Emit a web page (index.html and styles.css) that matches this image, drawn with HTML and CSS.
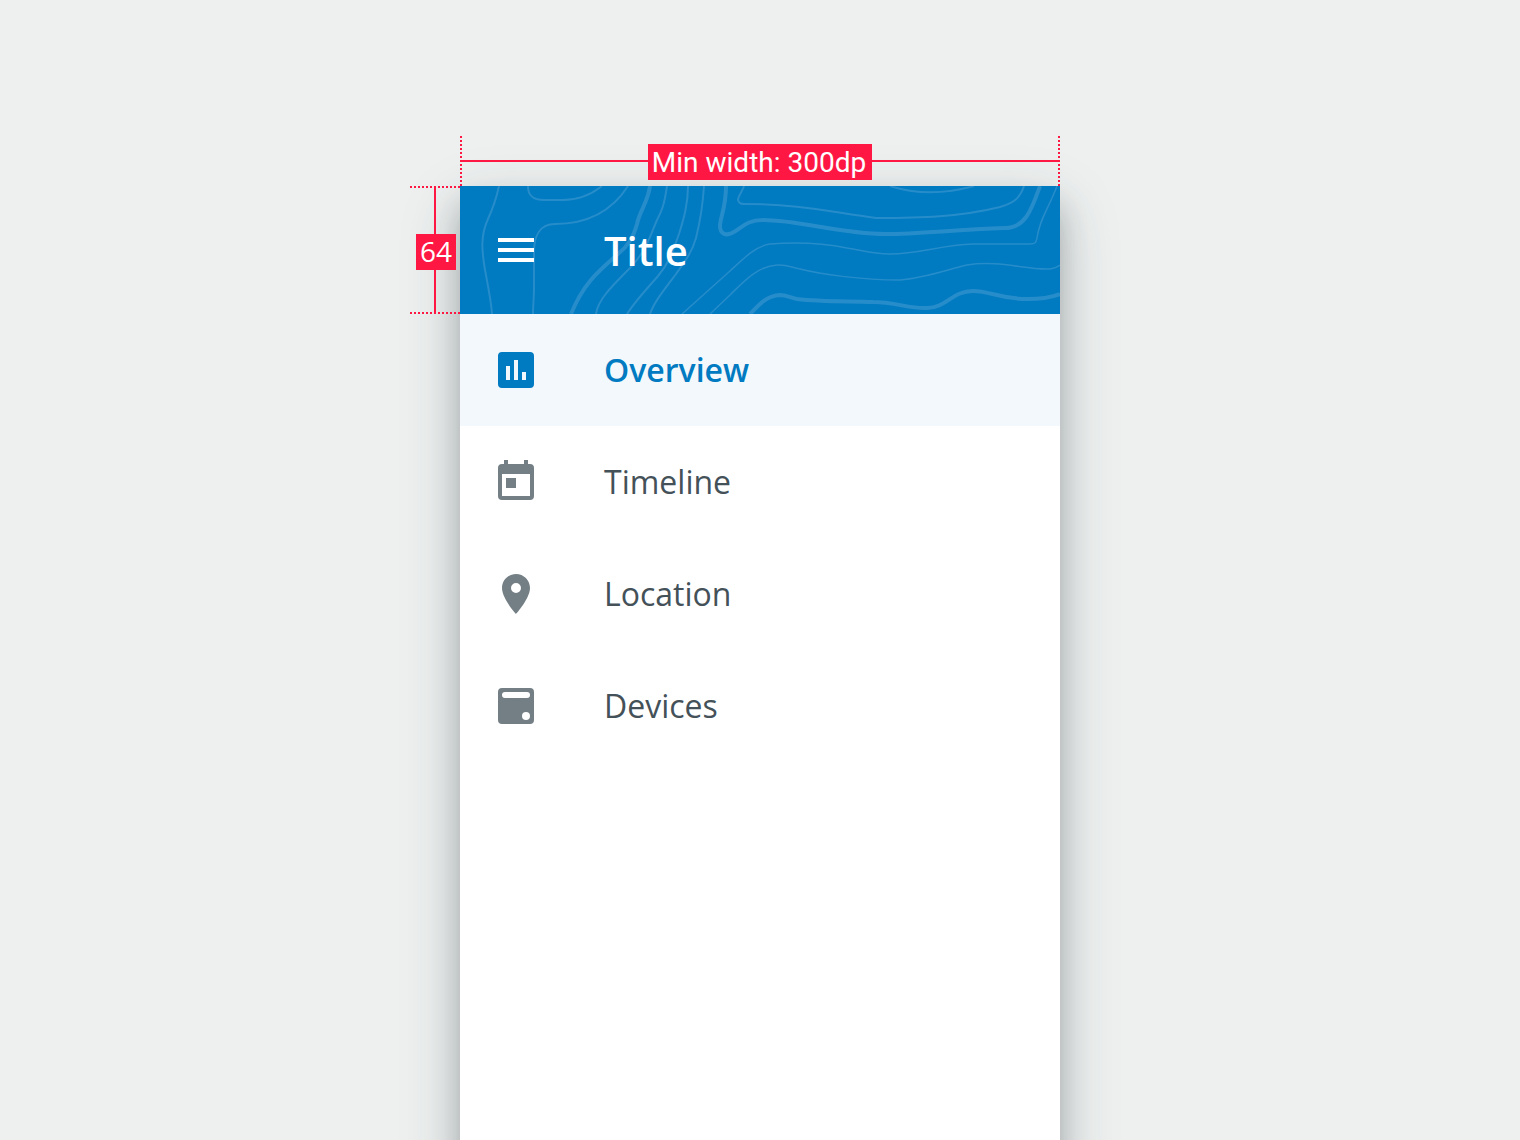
FILE: index.html
```html
<!DOCTYPE html>
<html lang="en">
<head>
<meta charset="utf-8">
<title>Navigation drawer</title>
<link rel="stylesheet" href="styles.css">
</head>
<body>
<main class="stage">
  <div class="measure measure-width"><span class="measure-label">Min width: 300dp</span></div>
  <div class="measure measure-height"><span class="measure-label measure-label-number">64</span></div>
  <section class="drawer">
    <header class="drawer-header">
      <svg class="contours" viewBox="0 0 600 128" preserveAspectRatio="xMidYMid slice" aria-hidden="true">
        <g class="contour-thin">
          <path d="M39 0C36 14 33 22 28 33C20 50 22 66 25 84C28 100 31 114 32 128"/>
          <path d="M68 0C68 10 73 14 84 14H103C120 14 132 8 142 0"/>
          <path d="M168 0C152 25 128 38 95 38C80 38 74 50 74 66V100C74 112 73 120 73 128"/>
          <path d="M207 0C204 20 202 24 197 34C190 50 187 64 170 82C150 102 138 114 136 128"/>
          <path d="M228 0C228 18 224 32 219 48C213 64 210 76 198 90C186 104 176 114 167 128"/>
          <path d="M244 0C243 16 241 32 236 52C232 66 226 74 216 88C204 104 194 116 190 128"/>
          <path d="M284 0C282 6 278 10 278 14C279 18 282 18 285 18C340 18 370 26 416 32C460 32 500 31 540 21C554 17 560 12 564 0"/>
          <path d="M430 0C455 8 485 8 514 0"/>
        </g>
        <g class="contour-fine">
          <path d="M222 128L270 85C284 72 296 60 310 58C336 56 362 57 387 62C402 64 410 68 430 68C460 68 480 59 513 58H570C576 58 576 56 577 52C580 32 588 24 597 0"/>
          <path d="M250 128L270 109C284 95 298 80 317 79C327 78 332 82 340 83C360 88 400 94 440 94C464 92 486 84 507 79C540 74 565 84 590 83C595 82 598 81 600 79"/>
        </g>
        <g class="contour-thick">
          <path d="M190 0C188 16 180 24 177 38C173 52 168 60 158 68C140 84 124 96 111 128"/>
          <path d="M266 0C266 22 260 32 260 40C260 48 266 50 272 47C282 42 286 34 303 34C340 34 380 48 425 48C460 48 490 44 545 42C566 42 572 22 580 0"/>
          <path d="M290 128C298 120 305 110 320 109C327 109 330 112 337 113C362 116 388 115 413 116C435 116 450 123 467 122C486 122 492 105 513 105C530 105 540 113 567 113C582 113 592 111 600 108"/>
        </g>
      </svg>
      <button class="menu-button" type="button" aria-label="Menu">
        <svg class="icon" viewBox="0 0 24 24" aria-hidden="true"><path d="M3 6h18v2H3zM3 11h18v2H3zM3 16h18v2H3z"/></svg>
      </button>
      <h1 class="drawer-title">Title</h1>
    </header>
    <nav>
      <ul class="nav-list">
        <li><a class="nav-item nav-item-active" href="#overview" aria-current="page">
          <svg class="icon" viewBox="0 0 24 24" aria-hidden="true"><path fill-rule="evenodd" d="M5 3h14a2 2 0 0 1 2 2v14a2 2 0 0 1-2 2H5a2 2 0 0 1-2-2V5a2 2 0 0 1 2-2zM7 10v7h2v-7zM11 7v10h2V7zM15 13v4h2v-4z"/></svg>
          <span>Overview</span></a></li>
        <li><a class="nav-item" href="#timeline">
          <svg class="icon" viewBox="0 0 24 24" aria-hidden="true"><path fill-rule="evenodd" d="M6 1h2v2h8V1h2v2h1a2 2 0 0 1 2 2v14a2 2 0 0 1-2 2H5a2 2 0 0 1-2-2V5a2 2 0 0 1 2-2h1zM5 8v11h14V8zM7 10h5v5H7z"/></svg>
          <span>Timeline</span></a></li>
        <li><a class="nav-item" href="#location">
          <svg class="icon" viewBox="0 0 24 24" aria-hidden="true"><path fill-rule="evenodd" d="M12 2C8.130 2 5 5.130 5 9c0 5.250 7 13 7 13s7-7.750 7-13c0-3.870-3.130-7-7-7zm0 9.500a2.500 2.500 0 0 1 0-5 2.500 2.500 0 0 1 0 5z"/></svg>
          <span>Location</span></a></li>
        <li><a class="nav-item" href="#devices">
          <svg class="icon" viewBox="0 0 24 24" aria-hidden="true"><path fill-rule="evenodd" d="M5 3h14a2 2 0 0 1 2 2v14a2 2 0 0 1-2 2H5a2 2 0 0 1-2-2V5a2 2 0 0 1 2-2zM6.500 5a1.500 1.500 0 0 0 0 3h11a1.500 1.500 0 0 0 0-3zM17 15a2 2 0 0 0 0 4 2 2 0 0 0 0-4z"/></svg>
          <span>Devices</span></a></li>
      </ul>
    </nav>
  </section>
</main>
</body>
</html>
```
FILE: styles.css
```css
* {
  box-sizing: border-box;
}

body {
  margin: 0;
  background: #edf0ef;
  font-family: "Open Sans", "Noto Sans", sans-serif;
}

.stage {
  --spec: #ff1744;
  display: grid;
  grid-template-columns: 1fr minmax(300px, 600px) 1fr;
  grid-template-rows: 50px 1fr;
  height: 100vh;
  padding-top: 136px;
  overflow: hidden;
}

/* Spec annotations */
.measure {
  z-index: 1;
  display: flex;
  align-items: center;
  justify-content: center;
  background-repeat: no-repeat;
}

.measure-width {
  grid-area: 1 / 2;
  padding-top: 2px;
  background-image:
    linear-gradient(var(--spec), var(--spec)),
    repeating-linear-gradient(to bottom, var(--spec) 0 2px, transparent 2px 4px),
    repeating-linear-gradient(to bottom, var(--spec) 0 2px, transparent 2px 4px);
  background-position: center, left top, right top;
  background-size: 100% 2px, 2px 100%, 2px 100%;
}

.measure-height {
  grid-area: 2 / 1;
  justify-self: end;
  width: 50px;
  height: 128px;
  padding: 4px 0 0 2px;
  background-image:
    linear-gradient(var(--spec), var(--spec)),
    repeating-linear-gradient(to right, var(--spec) 0 2px, transparent 2px 4px),
    repeating-linear-gradient(to right, var(--spec) 0 2px, transparent 2px 4px);
  background-position: center, left top, left bottom;
  background-size: 2px 100%, 100% 2px, 100% 2px;
}

.measure-label {
  height: 36px;
  padding: 0 6px 0 4px;
  background: var(--spec);
  color: #fff;
  font: 28px/38px Roboto, sans-serif;
  white-space: nowrap;
}

.measure-label-number {
  padding: 0 4px;
  font-family: "Open Sans", "Noto Sans", sans-serif;
  line-height: 34px;
}

/* Drawer */
.drawer {
  grid-area: 2 / 2;
  margin-bottom: -120px;
  background: #fff;
  box-shadow:
    0 20px 56px rgba(38, 46, 60, 0.22),
    0 20px 26px rgba(38, 50, 56, 0.24);
}

.drawer-header {
  position: relative;
  display: flex;
  align-items: center;
  gap: 64px;
  height: 128px;
  padding: 0 32px;
  background: #007ac1;
  color: #fff;
}

.contours {
  position: absolute;
  inset: 0;
  width: 100%;
  height: 100%;
  fill: none;
  stroke: #268dca;
}

.contour-fine {
  stroke-width: 1.500;
}

.contour-thin {
  stroke-width: 2;
}

.contour-thick {
  stroke-width: 4;
}

.menu-button {
  position: relative;
  display: flex;
  padding: 0;
  border: 0;
  background: none;
  color: inherit;
  cursor: pointer;
}

.icon {
  flex: none;
  width: 48px;
  height: 48px;
  fill: currentColor;
}

.drawer-title {
  position: relative;
  margin: 0;
  padding-top: 2px;
  font-size: 40px;
  font-weight: 600;
  line-height: 56px;
}

.nav-list {
  margin: 0;
  padding: 0;
  list-style: none;
}

.nav-item {
  display: flex;
  align-items: center;
  gap: 64px;
  height: 112px;
  padding: 0 32px;
  color: #445159;
  font-size: 32px;
  line-height: 48px;
  text-decoration: none;
}

.nav-item .icon {
  color: #737f85;
}

.nav-item-active,
.nav-item-active .icon {
  color: #007ac1;
}

.nav-item-active {
  background: #f2f8fc;
  font-weight: 600;
}
```
